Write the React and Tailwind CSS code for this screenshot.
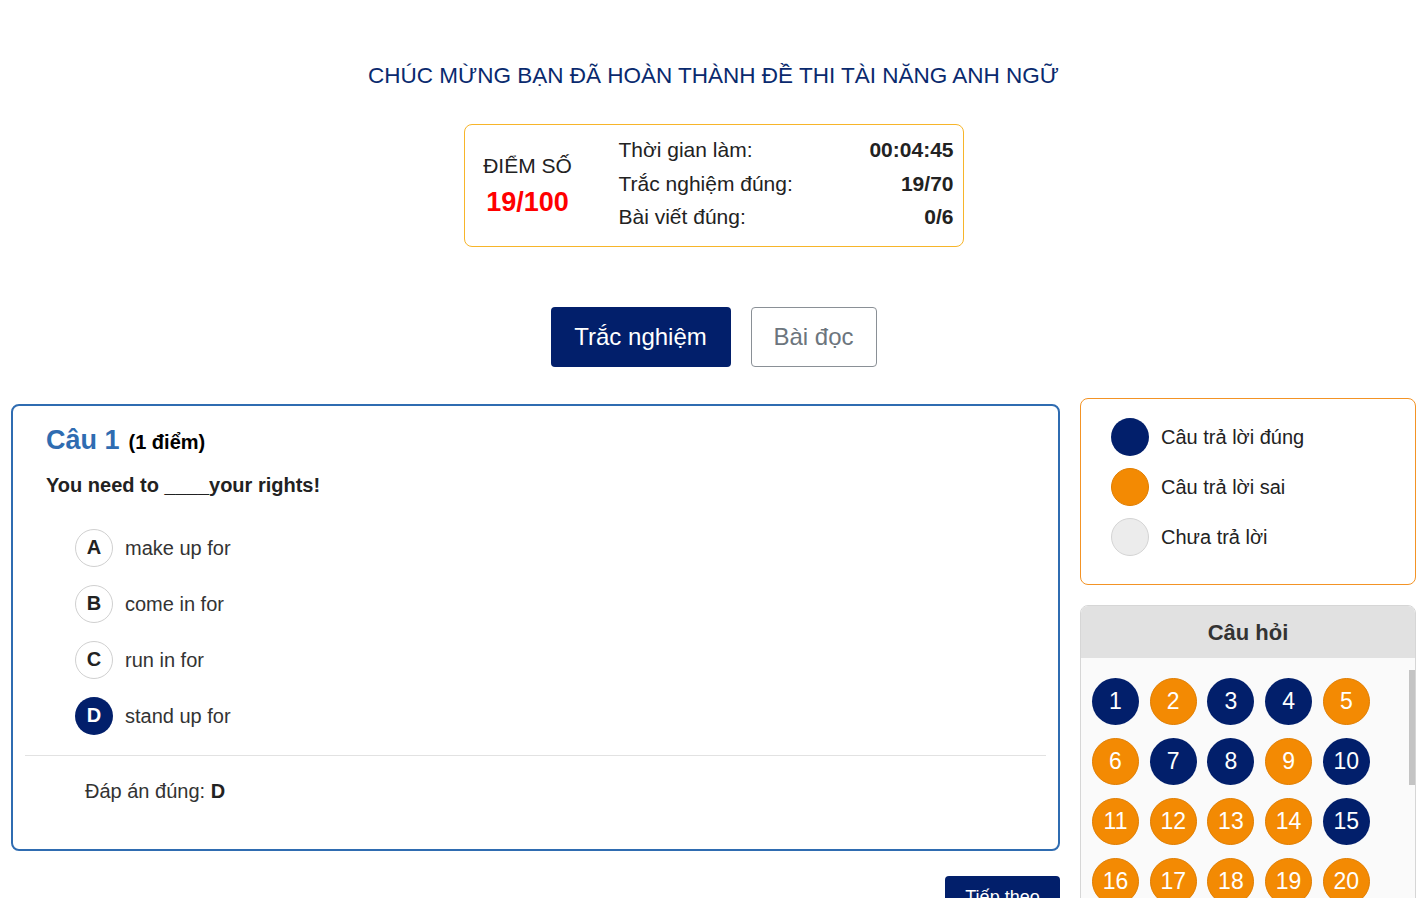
import React from 'react';

const NAVY = 'bg-[#021f6b]';

const OPTIONS = [
  { key: 'A', text: 'make up for' },
  { key: 'B', text: 'come in for' },
  { key: 'C', text: 'run in for' },
  { key: 'D', text: 'stand up for', picked: true },
];

// 'ok' = đúng, 'bad' = sai
const ANSWERS = [
  'ok', 'bad', 'ok', 'ok', 'bad',
  'bad', 'ok', 'ok', 'bad', 'ok',
  'bad', 'bad', 'bad', 'bad', 'ok',
  'bad', 'bad', 'bad', 'bad', 'bad',
];

function ScoreBox() {
  return (
    <div className="mx-auto mt-[35px] flex h-[123px] w-[500px] items-center rounded-lg border border-[#f7b52a] bg-white pr-[9px]">
      <div className="flex w-[126px] flex-col items-center">
        <span className="text-[21px] leading-[26px] text-[#222]">ĐIỂM SỐ</span>
        <span className="mt-[7px] text-[27px] font-bold leading-[32px] text-[#ff0000]">19/100</span>
      </div>
      <div className="ml-[28px] flex flex-1 flex-col pb-[4px] text-[21px] leading-[33.5px] text-[#222]">
        <div className="flex justify-between"><span>Thời gian làm:</span><b>00:04:45</b></div>
        <div className="flex justify-between"><span>Trắc nghiệm đúng:</span><b>19/70</b></div>
        <div className="flex justify-between"><span>Bài viết đúng:</span><b>0/6</b></div>
      </div>
    </div>
  );
}

function QuestionCard() {
  return (
    <div className="rounded-lg border-2 border-[#2f6cb1] bg-white pt-[19px] pb-[44px]">
      <div className="px-[33px]">
        <div className="flex items-baseline gap-[9px] leading-[30px]">
          <span className="text-[27px] font-bold text-[#2f6cb1]">Câu 1</span>
          <span className="text-[20px] font-bold text-black">(1 điểm)</span>
        </div>
        <p className="mt-[14px] text-[20px] font-bold leading-[28px] text-[#222]">
          You need to ____your rights!
        </p>
        <div className="mt-[30px] flex flex-col gap-[18px] pl-[29px]">
          {OPTIONS.map(o => (
            <div key={o.key} className="flex items-center gap-[12px]">
              <span
                className={`flex h-[38px] w-[38px] items-center justify-center rounded-full pb-[3px] text-[20px] font-bold ${
                  o.picked ? 'bg-[#021f6b] text-white' : 'border border-[#d0d0d0] text-[#222]'
                }`}
              >
                {o.key}
              </span>
              <span className="text-[20px] text-[#333]">{o.text}</span>
            </div>
          ))}
        </div>
      </div>
      <div className="mx-[12px] mt-[20px] h-px bg-[#e2e2e2]" />
      <p className="mt-[21px] pl-[72px] text-[20px] leading-[28px] text-[#333]">
        Đáp án đúng: <b className="text-[#222]">D</b>
      </p>
    </div>
  );
}

function Legend() {
  const rows = [
    { c: 'bg-[#021f6b]', t: 'Câu trả lời đúng' },
    { c: 'bg-[#f38a03] border border-[#e07d00]', t: 'Câu trả lời sai' },
    { c: 'bg-[#ececec] border border-[#d4d4d4]', t: 'Chưa trả lời' },
  ];
  return (
    <div className="flex flex-col gap-[12px] rounded-lg border border-[#f39325] bg-white pt-[19px] pb-[28px] pl-[30px]">
      {rows.map(r => (
        <div key={r.t} className="flex items-center gap-[12px]">
          <span className={`h-[38px] w-[38px] rounded-full ${r.c}`} />
          <span className="text-[20px] text-[#222]">{r.t}</span>
        </div>
      ))}
    </div>
  );
}

function QuestionGrid() {
  return (
    <div className="mt-[20px] overflow-hidden rounded-t-lg border border-[#d6d6d6]">
      <div className="flex h-[52px] items-center justify-center bg-[#e1e1e1] text-[22px] font-bold text-[#333]">
        Câu hỏi
      </div>
      <div className="relative bg-[#fafafa] pt-[20px] pb-[20px] pl-[11px]">
        <div className="grid w-[278px] grid-cols-5 gap-x-[10.5px] gap-y-[13px]">
          {ANSWERS.map((a, i) => (
            <span
              key={i}
              className={`flex h-[47px] w-[47px] items-center justify-center rounded-full text-[23px] text-white ${
                a === 'ok' ? 'bg-[#021f6b]' : 'border border-[#e07d00] bg-[#f38a03]'
              }`}
            >
              {i + 1}
            </span>
          ))}
        </div>
        <div className="absolute top-[12px] right-0 h-[115px] w-[6px] bg-[#c4c4c4]" />
      </div>
    </div>
  );
}

export default function App() {
  return (
    <div className="h-[898px] overflow-hidden bg-white" style={{ fontFamily: '"Liberation Sans", Arial, sans-serif' }}>
      <div className="ml-[11px] w-[1405px]">
        <h1 className="pt-[63px] text-center text-[22.5px] leading-[26px] text-[#0a2a6e]">
          CHÚC MỪNG BẠN ĐÃ HOÀN THÀNH ĐỀ THI TÀI NĂNG ANH NGỮ
        </h1>
        <ScoreBox />
        <div className="mt-[60px] flex justify-center gap-[20px]">
          <button className={`h-[60px] w-[180px] rounded ${NAVY} text-[24px] text-white`}>Trắc nghiệm</button>
          <button className="h-[60px] w-[126px] rounded border border-[#8a9096] bg-white text-[24px] text-[#6c757d]">Bài đọc</button>
        </div>
        <div className="mt-[31px] flex items-start gap-[20px]">
          <div className="w-[1049px] pt-[6px]">
            <QuestionCard />
            <div className="mt-[25px] flex justify-end">
              <button className={`h-[42px] w-[115px] rounded ${NAVY} text-[18px] text-white`}>Tiếp theo</button>
            </div>
          </div>
          <div className="w-[336px]">
            <Legend />
            <QuestionGrid />
          </div>
        </div>
      </div>
    </div>
  );
}
